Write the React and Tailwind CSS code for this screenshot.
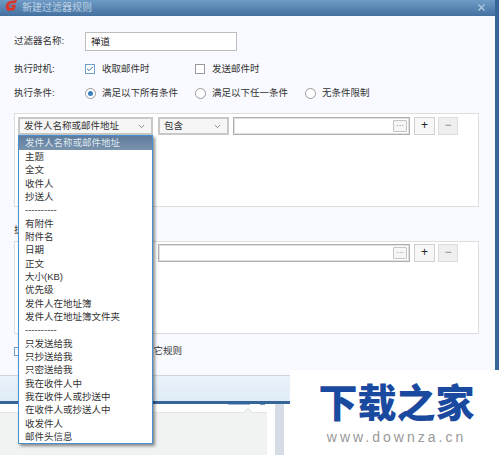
import React from 'react';
import { X, ChevronDown, Check } from 'lucide-react';

const font = "font-['Liberation_Sans','Noto_Sans_CJK_SC',sans-serif]";

const options = [
  '主题', '全文', '收件人', '抄送人', '----------', '有附件', '附件名', '日期', '正文', '大小(KB)', '优先级',
  '发件人在地址簿', '发件人在地址簿文件夹', '----------', '只发送给我', '只抄送给我', '只密送给我', '我在收件人中',
  '我在收件人或抄送中', '在收件人或抄送人中', '收发件人', '邮件头信息',
];

const Radio = ({ on, label, className = '' }) => (
  <div className={`flex items-center gap-[6px] ${className}`}>
    <span className="w-[11px] h-[11px] rounded-full border border-[#9a9a9a] bg-white flex items-center justify-center">
      {on && <span className="w-[5px] h-[5px] rounded-full bg-[#3a7fc0]" />}
    </span>
    <span className="whitespace-nowrap">{label}</span>
  </div>
);

const Select = ({ className, label }) => (
  <div className={`h-[18px] border-2 border-[#c8c8c8] bg-[#f6f6f6] flex items-center justify-between pl-[4px] pr-[5px] ${className}`}>
    <span className="whitespace-nowrap">{label}</span>
    <ChevronDown size={9} strokeWidth={2} className="text-[#666]" />
  </div>
);

const ValueInput = ({ className }) => (
  <div className={`h-[18px] border border-[#b0b0b0] ring-1 ring-inset ring-[#e0e0e0] bg-white flex items-center justify-end pr-[2px] ${className}`}>
    <span className="w-[14px] h-[12px] border border-[#c4c4c4] bg-[#f6f6f6] rounded-[1px] text-[8px] leading-[9px] text-center text-[#666]">···</span>
  </div>
);

const SideButtons = () => (
  <div className="flex gap-[3px] ml-[4px]">
    <span className="w-[21px] h-[18px] border border-[#d0d0d0] bg-[#f7f7f7] text-[#222] text-[12px] leading-[15px] text-center">+</span>
    <span className="w-[20px] h-[18px] border border-[#dcdcdc] bg-[#efefef] text-[#888] text-[12px] leading-[15px] text-center">−</span>
  </div>
);

export default function App() {
  return (
    <div className={`relative w-[500px] h-[455px] overflow-hidden bg-white text-[9.5px] text-[#333] ${font}`}>
      {/* dialog */}
      <div className="w-[499px] h-[404px] border-r-[4px] border-b-[3px] border-[#36659a] flex flex-col bg-[#f9faff]">
        <div className="h-[16px] shrink-0 flex items-center bg-gradient-to-b from-[#6f9cc6] to-[#43709f] pl-[5px] pr-[8px]">
          <svg width="13" height="12" viewBox="0 0 13 12" className="mb-[4px]">
            <path d="M5 1 L12 0 L11 3 L6 3.5 C3.5 4 3.5 8 6 8 L7.5 7.6 L7.8 6.4 L5.6 6.4 L6.2 4.8 L11 4.8 L9.6 10 L4 11 C-1 10.5 0 2 5 1 Z" fill="#d8372b" />
          </svg>
          <span className="ml-[4px] mb-[1px] text-[#bcd0e2] text-[10px] leading-[10px]">新建过滤器规则</span>
          <X size={11} strokeWidth={2.5} className="ml-auto mb-[2px] text-[#b5cde3]" />
        </div>

        <div className="flex-1 flex flex-col pl-[14px]">
          <div className="flex items-center mt-[16px] h-[19px]">
            <span className="w-[71px]">过滤器名称:</span>
            <div className="w-[152px] h-[19px] border border-[#bdbdbd] bg-white pl-[5px] leading-[17px] text-[#222]">禅道</div>
          </div>
          <div className="flex items-center mt-[11px] h-[14px]">
            <span className="w-[71px]">执行时机:</span>
            <span className="w-[10px] h-[10px] border border-[#6f9fca] bg-white flex items-center justify-center">
              <Check size={8} strokeWidth={3} className="text-[#2f6ea8]" />
            </span>
            <span className="ml-[7px] w-[93px]">收取邮件时</span>
            <span className="w-[10px] h-[10px] border border-[#9a9a9a] bg-white" />
            <span className="ml-[7px]">发送邮件时</span>
          </div>
          <div className="flex items-center mt-[10px] h-[14px]">
            <span className="w-[71px]">执行条件:</span>
            <Radio on label="满足以下所有条件" className="w-[110px]" />
            <Radio label="满足以下任一条件" className="w-[110px]" />
            <Radio label="无条件限制" />
          </div>

          <div className="mt-[13px] w-[465px] h-[94px] bg-white border border-[#dedede] pt-[3px] pl-[3px] flex items-start">
            <Select className="w-[135px]" label="发件人名称或邮件地址" />
            <Select className="w-[71px] ml-[5px]" label="包含" />
            <ValueInput className="w-[177px] ml-[4px]" />
            <SideButtons />
          </div>

          <div className="mt-[17px] h-[12px] leading-[12px]">执行操作:</div>

          <div className="mt-[5px] w-[465px] h-[93px] bg-white border border-[#dedede] pt-[2px] pl-[143px] flex items-start">
            <ValueInput className="w-[252px]" />
            <SideButtons />
          </div>

          <div className="mt-[11px] flex items-center h-[12px]">
            <span className="w-[9px] h-[9px] border border-[#6f9fca] bg-white" />
            <span className="ml-[102px]">处理其它规则</span>
          </div>
        </div>

        {/* footer strip */}
        <div className="h-[26px] shrink-0 bg-gradient-to-b from-[#e9f2fb] to-[#dfecf6] border-t border-[#cdd5de]" />
      </div>

      {/* window behind the dialog */}
      <div className="flex h-[51px]">
        <div className="w-[267px] mt-[8px] border-t border-[#e4e7e7] bg-[#f0f3f2]" />
        <div className="w-[9px] ml-[8px] bg-[#d5dce6]" />
      </div>

      {/* tooltip notch peeking out under the dialog */}
      <span className="absolute left-[245px] top-[409px] w-[6px] h-[6px] rotate-45 bg-[#f0f3f2] border-l border-t border-[#e4e7e7]" />
      <span className="absolute left-[228px] top-[404px] w-[22px] h-[1px] bg-[#9db8d2]" />
      <span className="absolute left-[260px] top-[404px] w-[5px] h-[1px] bg-[#6f95bb]" />

      {/* open dropdown */}
      <div className="absolute left-[18px] top-[135px] w-[135px] h-[309px] border border-[#4a90cf] bg-white shadow-[2px_2px_3px_rgba(0,0,0,0.45)]">
        <div className="h-[14px] leading-[14px] pl-[6px] bg-gradient-to-b from-[#5f7c9c] to-[#7a93ad] text-[#dfe8f0]">发件人名称或邮件地址</div>
        {options.map((o, i) => (
          <div key={i} className="h-[13.33px] leading-[13.33px] pl-[6px]">{o}</div>
        ))}
      </div>

      {/* watermark */}
      <div className="absolute left-[290px] top-[370px] w-[210px] h-[85px] bg-white flex flex-col items-center pl-[3px]">
        <span className="mt-[14px] text-[#1a4aa0] text-[39px] leading-[40px] font-black whitespace-nowrap">下载之家</span>
        <span className="mt-[5px] text-[#999] text-[14px] leading-[16px] tracking-[3px] whitespace-nowrap">www.downza.cn</span>
      </div>
    </div>
  );
}
